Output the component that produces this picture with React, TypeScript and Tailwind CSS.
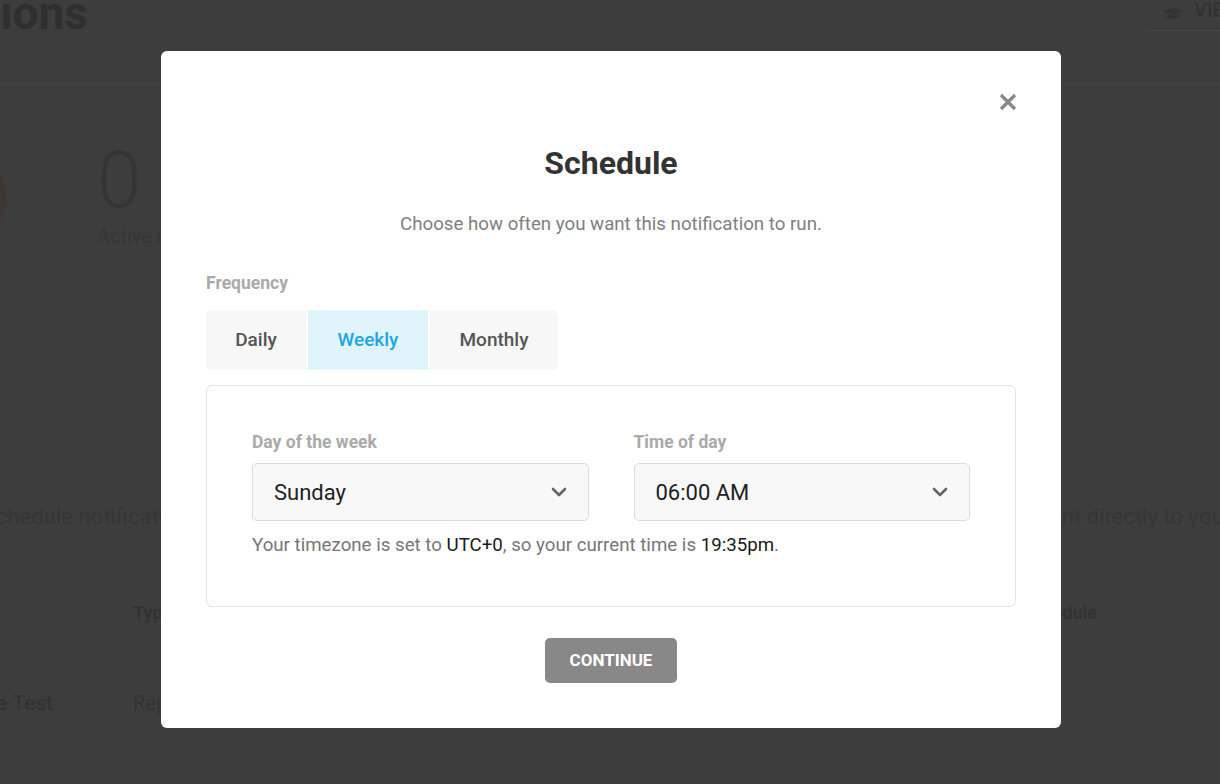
import { FaGraduationCap } from "react-icons/fa";

const font = { fontFamily: "Roboto, 'Noto Sans', sans-serif" };

const Chevron = () => (
  <svg width="16" height="10" viewBox="0 0 16 10" fill="none">
    <path d="M2 2l6 6 6-6" stroke="#666" strokeWidth="2.6" strokeLinecap="round" strokeLinejoin="round" />
  </svg>
);

const SelectBox = ({ label, value }: { label: string; value: string }) => (
  <div className="flex flex-col">
    <span className="text-[17.5px] leading-[24px] font-bold text-[#aaa]">{label}</span>
    <div className="mt-[9px] flex h-[58px] items-center justify-between rounded-[5px] border border-[#dcdcdc] bg-[#f8f8f8] pl-[21px] pr-[21px]">
      <span className="text-[22px] text-[#222]">{value}</span>
      <Chevron />
    </div>
  </div>
);

const ScheduleModal = () => {
  const tabs = [
    { name: "Daily", width: "w-[100px]", active: false },
    { name: "Weekly", width: "w-[120px]", active: true },
    { name: "Monthly", width: "w-[128px]", active: false },
  ];

  return (
    <div className="relative ml-[2px] flex w-[900px] flex-col rounded-md bg-white px-[45px] pt-[92px] pb-[45px]">
      <button className="absolute top-[42px] right-[44px] p-0">
        <svg width="18" height="18" viewBox="0 0 18 18">
          <path d="M2 2l14 14M16 2L2 16" stroke="#888" strokeWidth="3.2" />
        </svg>
      </button>
      <h2 className="text-center text-[32px] leading-[40px] font-bold text-[#333]">Schedule</h2>
      <p className="mt-[27px] text-center text-[18.7px] leading-[28px] text-[#808080]">
        Choose how often you want this notification to run.
      </p>
      <span className="mt-[33px] text-[17.5px] leading-[24px] font-bold text-[#aaa]">Frequency</span>
      <div className="mt-[15px] flex h-[60px] gap-[2px] self-start overflow-hidden rounded-[6px]">
        {tabs.map((t) => (
          <div
            key={t.name}
            className={`${t.width} flex items-center justify-center text-[19px] font-medium ${
              t.active ? "bg-[#e1f4fc] text-[#1ba8e6]" : "bg-[#f7f7f7] text-[#555]"
            }`}
          >
            {t.name}
          </div>
        ))}
      </div>
      <div className="mt-[15px] rounded-[6px] border border-[#e3e3e3] px-[45px] pt-[44px] pb-[48px]">
        <div className="grid grid-cols-2 gap-[45px]">
          <SelectBox label="Day of the week" value="Sunday" />
          <SelectBox label="Time of day" value="06:00 AM" />
        </div>
        <p className="mt-[11px] text-[18.7px] leading-[26px] text-[#777]">
          Your timezone is set to <span className="text-[#1a1a1a]">UTC+0</span>, so your current time is{" "}
          <span className="text-[#1a1a1a]">19:35pm</span>.
        </p>
      </div>
      <button className="mt-[31px] h-[45px] w-[132px] self-center rounded-[5px] bg-[#888] text-[17px] font-bold text-white">
        CONTINUE
      </button>
    </div>
  );
};

export default function App() {
  return (
    <div className="relative h-[784px] w-full overflow-hidden bg-[#3d3d3d]" style={font}>
      {/* page behind the overlay */}
      <div className="flex h-[85px] items-start justify-between border-b border-[#424242]">
        <div className="-mt-[10px] flex w-[88px] justify-end overflow-hidden">
          <h1 className="text-[46px] leading-none font-bold whitespace-nowrap text-[#2f2f2f]">Notifications</h1>
        </div>
        <div className="flex h-[31px] w-[75px] items-start gap-[11px] overflow-hidden border-b border-[#454545] pt-[1px] pl-[19px] whitespace-nowrap">
          <FaGraduationCap className="mt-[3px] shrink-0 text-[#333]" size={19} />
          <span className="text-[20px] leading-[18px] font-medium text-[#333]">VIEW</span>
        </div>
      </div>
      <div className="mt-[64px] flex items-start">
        <div className="-ml-[184px] h-[96px] w-[190px] rounded-full border-[5px] border-[#3f3631]" />
        <div className="ml-[91px] flex flex-col">
          <span className="-mt-[14px] text-[80px] leading-[90px] font-light text-[#353535]">0</span>
          <span className="-mt-[2px] text-[20px] leading-[26px] text-[#363636]">Active notifications</span>
        </div>
      </div>
      <div className="mt-[254px] flex justify-between text-[22px] leading-[28px] text-[#363636]">
        <div className="flex w-[200px] justify-end overflow-hidden whitespace-nowrap">
          <span>Schedule notifications</span>
        </div>
        <span className="w-[181px] overflow-hidden whitespace-nowrap">sent directly to your inbox</span>
      </div>
      <div className="mt-[70px] flex text-[18px] leading-[24px] font-bold text-[#333]">
        <span className="ml-[133px]">Type</span>
        <span className="mr-[123px] ml-auto">Schedule</span>
      </div>
      <div className="mt-[65px] flex text-[20px] leading-[26px] text-[#333]">
        <div className="flex w-[53px] justify-end overflow-hidden whitespace-nowrap">
          <span className="text-[21px] font-medium">Performance Test</span>
        </div>
        <span className="ml-[80px]">Report</span>
      </div>

      {/* overlay */}
      <div className="absolute inset-0 flex items-start justify-center pt-[51px]">
        <ScheduleModal />
      </div>
    </div>
  );
}
